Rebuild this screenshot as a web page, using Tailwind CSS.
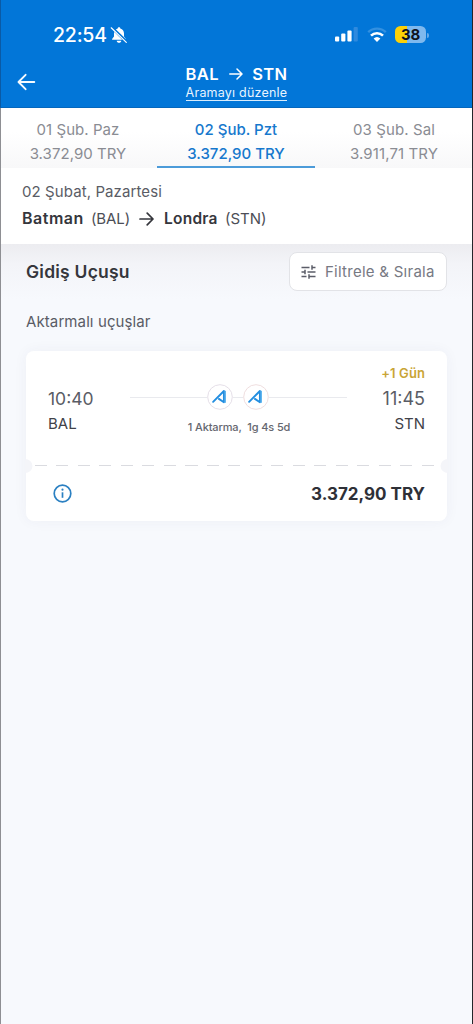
<!DOCTYPE html>
<html lang="tr">
<head>
<meta charset="utf-8">
<title>Uçuş seçimi</title>
<script src="https://cdn.jsdelivr.net/npm/@tailwindcss/browser@4"></script>
</head>
<body class="w-[473px] h-[1024px] overflow-hidden bg-[#f7f9fd] font-['Inter',sans-serif] text-[#35363c]">
<div class="flex h-full flex-col border-l border-l-[#8e8f93] border-r border-r-[#24262b]">
  <header class="-ml-px h-[108px] shrink-0 border-l border-l-[#0a5aa5] border-b border-b-[#0567bd] bg-[#0276d8] text-white">
    <div class="flex h-[70px] items-center justify-between pl-[52px] pr-[43px]">
      <div class="flex items-center gap-[3px]">
        <span class="text-[19.5px] leading-6 font-medium tracking-[-0.2px]">22:54</span>
        <svg class="size-[18px]" viewBox="0 0 18 18">
          <path d="M9 1.2c.8 0 1.3.5 1.3 1.2 2.300.6 3.700 2.400 3.700 5v3.200l1.900 2.500v.7H2.100v-.7L4 10.600V7.400c0-2.600 1.400-4.400 3.700-5 0-.7.500-1.200 1.300-1.200zM6.700 14.700h4.600c-.2 1.300-1.100 2.100-2.300 2.100s-2.100-.8-2.300-2.100z" fill="#fff"/>
          <path d="M1.800 1.500 16.600 15.800" stroke="#0276d8" stroke-width="3"/>
          <path d="M1.200 1.800 16.300 16.400" stroke="#fff" stroke-width="1.200" stroke-linecap="round"/>
        </svg>
      </div>
      <div class="flex items-center">
        <svg class="h-4 w-[24px]" viewBox="0 0 24 16">
          <rect x="1" y="9.500" width="4.200" height="5" rx="1" fill="#fff"/>
          <rect x="7.200" y="6.500" width="4.200" height="8" rx="1" fill="#fff"/>
          <rect x="13.400" y="3.500" width="4.200" height="11" rx="1" fill="#fff"/>
          <rect x="19.600" y="0" width="4.200" height="14.500" rx="1" fill="#2f8ade"/>
        </svg>
        <svg class="ml-[9px] h-4 w-5" viewBox="0 0 20 16">
          <g fill="none">
            <path d="M1.200 5.200a12.700 12.700 0 0 1 17.600 0" stroke="#3390e0" stroke-width="2.400"/>
            <path d="M4 8.600a8.700 8.700 0 0 1 12 0" stroke="#fff" stroke-width="2.600"/>
          </g>
          <path d="M6.600 11.500a5 5 0 0 1 6.800 0L10 15z" fill="#fff"/>
        </svg>
        <div class="-mt-px ml-2 flex h-[17px] w-[31px] items-center justify-center rounded-[5.500px] bg-[linear-gradient(90deg,#fdd106_38%,#7fb9ee_38%)] text-[15px] leading-none font-bold tracking-[-0.1px] text-[#10131c]">38</div>
        <div class="ml-px h-[5px] w-[2px] rounded-r-full bg-[#66abe9]"></div>
      </div>
    </div>
    <div class="-mt-[6px] grid grid-cols-[48px_1fr_48px]">
      <svg class="mt-[9px] ml-4 h-[18px] w-[19px]" viewBox="0 0 19 18" fill="none" stroke="#f4faff" stroke-width="1.900" stroke-linecap="round" stroke-linejoin="round"><path d="M17.300 9H1.800M8.600 1.800 1.500 9l7.100 7.200"/></svg>
      <div class="flex flex-col items-center">
        <div class="mb-px flex h-5 items-center text-[16.500px] leading-5 font-semibold tracking-[0.500px]">
          <span>BAL</span>
          <svg class="mr-[9px] ml-[10px] h-3 w-[14px]" viewBox="0 0 14 12" fill="none" stroke="#fff" stroke-width="1.500" stroke-linecap="round" stroke-linejoin="round"><path d="M.8 6h12M8 1l5 5-5 5"/></svg>
          <span class="tracking-[0.400px]">STN</span>
        </div>
        <a class="border-b border-[#d9ecfc] text-[12.500px] leading-[15px] tracking-[0.220px] text-[#e8f4ff]">Aramayı düzenle</a>
      </div>
    </div>
  </header>

  <nav class="grid h-[60px] shrink-0 grid-cols-[156px_158px_157px] bg-linear-to-b from-white from-40% to-[#f8f8f9] text-center text-[15px] leading-6 text-[#8a8c93]">
    <div class="pt-[10px] pr-[2px] tracking-[0.050px]">01 Şub. Paz<br>3.372,90 TRY</div>
    <div class="border-b-2 border-[#4c9bd9] pt-[10px] font-medium text-[#1678cd]">02 Şub. Pzt<br>3.372,90 TRY</div>
    <div class="pt-[10px] pl-px tracking-[0.120px]">03 Şub. Sal<br>3.911,71 TRY</div>
  </nav>

  <section class="h-[76px] shrink-0 bg-white pt-3 pl-[21px]">
    <p class="text-[15px] leading-6 tracking-[0.090px] text-[#5a5c65]">02 Şubat, Pazartesi</p>
    <div class="mt-[2px] flex items-baseline text-[15px] leading-6 text-[#4c4e56]">
      <b class="w-[62px] text-[16px] font-semibold tracking-[0.500px] whitespace-nowrap text-[#35363c]">Batman</b>
      <span class="ml-[7px] w-[39px] tracking-[-0.1px]">(BAL)</span>
      <svg class="mr-[9px] ml-[9px] h-[14px] w-[15px] self-center" viewBox="0 0 15 14" fill="none" stroke="#35363c" stroke-width="1.700" stroke-linecap="round" stroke-linejoin="round"><path d="M1 7h12.800M8.200 1.200 14 7l-5.800 5.800"/></svg>
      <b class="ml-px w-[54px] text-[15.500px] font-semibold tracking-[0.250px] whitespace-nowrap text-[#35363c]">Londra</b>
      <span class="ml-[7px]">(STN)</span>
    </div>
  </section>

  <main class="flex-1 bg-[linear-gradient(#ececf0,#f3f4f8_20px,#f7f9fd_56px)] px-[25px] pt-2">
    <div class="flex items-center justify-between">
      <h1 class="text-[17.500px] leading-6 font-semibold tracking-[0.220px]">Gidiş Uçuşu</h1>
      <button class="flex h-[39px] w-[158px] items-center rounded-lg border border-[#e2e3e7] bg-white pl-[11px] text-[15px] text-[#777983]">
        <svg class="mr-[9px] h-[14px] w-[15px]" viewBox="0 0 15 14" fill="none" stroke="#5b5d68" stroke-width="1.500"><path d="M.5 2.500h8M11 2.500h3.500M11 .2v4.600M.5 7H4M6.500 7h8M4 4.700v4.600M.5 11.500h5M8 11.500h6.500M8 9.200v4.600"/></svg>
        <span class="pt-px tracking-[0.260px]">Filtrele &amp; Sırala</span>
      </button>
    </div>
    <h2 class="mt-[19px] text-[15px] leading-6 tracking-[0.100px] text-[#5a5c65]">Aktarmalı uçuşlar</h2>

    <article class="mt-[17px] w-[421px] rounded-lg bg-white shadow-[0_0_14px_rgba(60,60,90,0.050)]">
      <div class="grid h-[114px] grid-cols-[104px_217px_1fr] pr-[22px] pl-[22px]">
        <div class="w-[82px] pt-[35px] text-[17.500px] leading-[26px] text-[#5a5c65]">10:40<p class="-mt-px text-[15px] leading-[25px] text-[#414249]">BAL</p></div>
        <div class="-ml-[22px] pt-[33px]">
          <div class="flex items-center">
            <div class="h-px w-[77px] bg-[#e9eaee]"></div>
            <svg class="size-[26px]" viewBox="0 0 26 26" fill="none"><circle cx="13" cy="13" r="12.300" fill="#fff" stroke="#e5dfe8"/><path d="M6.100 17.800 16.900 7v11.200l-5-3.300" stroke="#238ee0" stroke-width="1.900" stroke-linejoin="round" stroke-linecap="round"/><path d="M18.400 6.800v12" stroke="#50aeee"/></svg>
            <div class="h-px w-[10px] bg-[#e9eaee]"></div>
            <svg class="size-[26px]" viewBox="0 0 26 26" fill="none"><circle cx="13" cy="13" r="12.300" fill="#fff" stroke="#efdedf"/><path d="M6.100 17.800 16.900 7v11.200l-5-3.300" stroke="#238ee0" stroke-width="1.900" stroke-linejoin="round" stroke-linecap="round"/><path d="M18.400 6.800v12" stroke="#50aeee"/></svg>
            <div class="h-px w-[78px] bg-[#e9eaee]"></div>
          </div>
          <p class="mt-[9px] pr-[21px] text-center text-[11px] leading-4 font-medium tracking-[-0.130px] text-[#65676f]">1 Aktarma,&nbsp; 1g 4s 5d</p>
        </div>
        <div class="pt-[11px] text-right text-[18px] leading-[26px] text-[#5a5c65]"><p class="mb-[2px] text-[13px] leading-[22px] font-semibold tracking-[0.100px] text-[#c9a536]">+1 Gün</p>11:45<p class="-mt-px text-[15px] leading-[25px] text-[#414249]">STN</p></div>
      </div>
      <div class="-mx-px flex h-px items-center justify-between">
        <svg class="h-[14px] w-[8px]" viewBox="0 0 8 14"><path d="M0 0a7.500 7 0 0 1 0 14z" fill="#f4f5f9"/></svg>
        <div class="h-px w-[404px] bg-[repeating-linear-gradient(90deg,#dadbe0_0_12px,transparent_12px_21.500px)]"></div>
        <svg class="h-[14px] w-[8px]" viewBox="0 0 8 14"><path d="M8 0a7.500 7 0 0 0 0 14z" fill="#f4f5f9"/></svg>
      </div>
      <div class="flex h-[55px] items-center justify-between pr-[22px] pl-[27px]">
        <svg class="size-[19px]" viewBox="0 0 19 19" fill="none"><circle cx="9.500" cy="9.500" r="8.300" stroke="#2b80c2" stroke-width="1.700"/><path d="M9.500 8.300v5.500" stroke="#2b80c2" stroke-width="1.700"/><circle cx="9.500" cy="5.700" r="1.100" fill="#2b80c2"/></svg>
        <strong class="text-[17px] leading-6 font-bold text-[#2e3037]">3.372,90 TRY</strong>
      </div>
    </article>
  </main>
</div>
</body>
</html>
